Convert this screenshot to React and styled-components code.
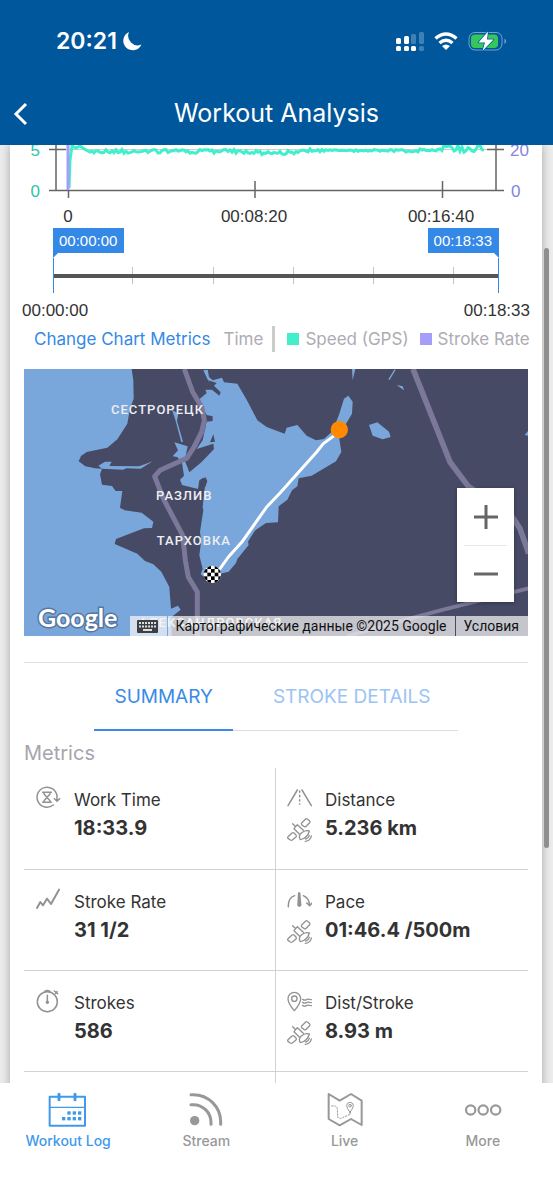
import React, { useState } from "react";
import styled, { createGlobalStyle } from "styled-components";

const GlobalStyle = createGlobalStyle`
  *, *::before, *::after { box-sizing: border-box; }
  body { margin: 0; background: #ececec; }
  button { font: inherit; color: inherit; background: none; border: 0; padding: 0; margin: 0; cursor: pointer; }
  svg { display: block; }
`;

const sans = `Inter, "Noto Sans", sans-serif`;
const numeric = `"Liberation Sans", Arial, sans-serif`;
const mapFont = `Roboto, "Noto Sans", sans-serif`;

const Shell = styled.div`
  display: flex;
  flex-direction: column;
  height: 100vh;
  font-family: ${sans};
  color: #333;
`;

const Header = styled.header`
  flex: none;
  background: #00579c;
  color: #fff;
  position: relative;
  z-index: 2;
`;

const StatusBar = styled.div`
  display: flex;
  align-items: center;
  justify-content: space-between;
  height: 82px;
  padding: 0 46px 0 56px;
`;

const Clock = styled.div`
  display: flex;
  align-items: center;
  gap: 4px;
  font-size: 23px;
  font-weight: 600;
`;

const NavBar = styled.div`
  display: grid;
  grid-template-columns: 1fr auto 1fr;
  align-items: center;
  height: 63px;
  padding: 0 12px;
`;

const BackButton = styled.button`
  justify-self: start;
`;

const Title = styled.h1`
  margin: 0;
  font-size: 25px;
  font-weight: 400;
  line-height: 31px;
`;

const Main = styled.main`
  flex: 1;
  min-height: 0;
  overflow: hidden;
  position: relative;
`;

const ScrollThumb = styled.div`
  position: absolute;
  right: 4px;
  top: 11%;
  width: 5px;
  height: 64%;
  border-radius: 3px;
  background: #8f8f8f;
`;

const Card = styled.article`
  margin: 0 11px 0 10px;
  background: #fff;
  box-shadow: 0 0 9px rgba(0, 0, 0, 0.3);
`;

const ChartSvg = styled.svg`
  width: 100%;
  height: auto;
  font-family: ${numeric};
  font-size: 17px;
`;

const RangePicker = styled.div`
  padding: 0 43px;
`;

const FlagRow = styled.div`
  display: flex;
  justify-content: space-between;
`;

const Flag = styled.output`
  height: 30px;
  padding: 0 7px 0 6px;
  background: #3488e6;
  color: #fff;
  font: 15px/25px ${numeric};
  clip-path: ${(p) =>
    p.$end
      ? "polygon(0 0, 100% 0, 100% 100%, calc(100% - 5px) 25px, 0 25px)"
      : "polygon(0 0, 100% 0, 100% 25px, 5px 25px, 0 100%)"};
`;

const RangeStack = styled.div`
  display: grid;
  align-items: center;
  height: 35px;
  & > * { grid-area: 1 / 1; }
`;

const Ticks = styled.div`
  display: flex;
  height: 17px;
`;

const Tick = styled.span`
  width: 18%;
  border-right: 1px solid #c4c4c4;
`;

const RangeTrack = styled.div`
  height: 4px;
  background: #555;
`;

const RangeInput = styled.input`
  appearance: none;
  width: 100%;
  height: 35px;
  margin: 0;
  background: none;
  pointer-events: none;
  &::-webkit-slider-thumb {
    appearance: none;
    width: 1px;
    height: 35px;
    background: #3488e6;
    pointer-events: auto;
  }
`;

const RangeEnds = styled.div`
  display: flex;
  justify-content: space-between;
  padding: 8px 12px 0;
  font: 17px/20px ${numeric};
`;

const Legend = styled.div`
  display: flex;
  align-items: center;
  height: 36px;
  padding-left: 24px;
  font-size: 17px;
  white-space: nowrap;
  color: #adacb3;
`;

const MetricsLink = styled.button`
  color: #3488e6;
  margin-right: 13px;
`;

const LegendDivider = styled.span`
  width: 3px;
  height: 26px;
  margin: 0 12px 0 9px;
  background: #ccc;
`;

const LegendItem = styled.span`
  display: flex;
  align-items: center;
  gap: 6px;
  margin-right: 11px;
  &::before {
    content: "";
    width: 12px;
    height: 12px;
    background: ${(p) => p.$color};
  }
`;

const Body = styled.div`
  padding: 12px 14px 0;
`;

const MapFrame = styled.section`
  position: relative;
  overflow: hidden;
  aspect-ratio: 504 / 267;
  background: #464a65;
  font-family: ${mapFont};
`;

const MapSvg = styled.svg`
  width: 100%;
  height: 100%;
`;

const MapLabel = styled.span`
  position: absolute;
  left: ${(p) => p.$x}%;
  top: ${(p) => p.$y}%;
  transform: translate(-50%, -50%);
  font-size: 13px;
  font-weight: 500;
  line-height: 16px;
  letter-spacing: 1px;
  color: #eeeef2;
`;

const MapLogo = styled.a`
  position: absolute;
  left: 14px;
  bottom: 4px;
  color: #fff;
  text-decoration: none;
  font: 700 25px/30px Lato, sans-serif;
  -webkit-text-stroke: 3px #56779f;
  paint-order: stroke fill;
`;

const Attribution = styled.div`
  position: absolute;
  right: 0;
  bottom: 0;
  display: flex;
  gap: 1px;
  height: 20px;
  font-size: 14px;
  line-height: 20px;
  color: #111;
  white-space: nowrap;
  & > * {
    display: flex;
    align-items: center;
    padding: 0 9px 0 7px;
    background: rgba(245, 245, 245, 0.72);
  }
  a { color: inherit; text-decoration: none; }
`;

const ZoomControl = styled.div`
  position: absolute;
  right: 14px;
  bottom: 34px;
  width: 57px;
  background: #fff;
  box-shadow: 0 1px 4px rgba(0, 0, 0, 0.3);
  padding: 0 7px;
`;

const ZoomButton = styled.button`
  display: grid;
  place-items: center;
  width: 100%;
  height: 57px;
  & + & { border-top: 1px solid #e6e6e6; }
`;

const Rule = styled.hr`
  height: 1px;
  border: 0;
  margin: 26px 0 0;
  background: #e0e0e0;
`;

const Tabs = styled.div`
  display: flex;
  width: max-content;
  margin: 0 auto;
  border-bottom: 1px solid #ddd;
`;

const Tab = styled.button`
  height: 68px;
  padding: ${(p) => (p.$active ? "0 20px" : "0 27px 0 40px")};
  margin-bottom: -1px;
  border-bottom: 2px solid ${(p) => (p.$active ? "#3a8ae6" : "transparent")};
  color: ${(p) => (p.$active ? "#3a8ae6" : "#9bc4f3")};
  font-size: 19px;
`;

const SectionTitle = styled.h2`
  margin: 0;
  padding-top: 8px;
  font-size: 20px;
  font-weight: 400;
  line-height: 29px;
  color: #a6a5ad;
`;

const MetricGrid = styled.dl`
  display: grid;
  grid-template-columns: 1fr 1fr;
  margin: 0;
`;

const MetricCell = styled.div`
  display: flex;
  gap: 13px;
  height: ${(p) => (p.$first ? 102 : 101)}px;
  padding: 17px 0 0 11px;
  border-bottom: 1px solid #d2d2d2;
  &:nth-child(odd) {
    padding-left: 12px;
    border-right: 1px solid #d2d2d2;
  }
`;

const IconColumn = styled.div`
  display: flex;
  flex-direction: column;
  gap: 7px;
  color: #929292;
`;

const MetricLabel = styled.dt`
  font-size: 17px;
  line-height: 30px;
`;

const MetricValue = styled.dd`
  margin: 0;
  font-size: 20px;
  font-weight: 700;
  line-height: 26px;
`;

const TabBar = styled.nav`
  flex: none;
  display: flex;
  height: 117px;
  background: #fff;
  position: relative;
  z-index: 2;
`;

const TabBarItem = styled.a`
  flex: 1;
  display: flex;
  flex-direction: column;
  align-items: center;
  gap: 5px;
  padding: 8px 2px 0 0;
  color: ${(p) => (p.$active ? "#4299ea" : "#989898")};
  font-size: 14px;
  font-weight: 500;
  line-height: 16px;
  text-decoration: none;
`;

const MetricIcon = ({ box, children, width = 4 }) => (
  <svg width="25" height="25" viewBox={box} fill="none" stroke="currentColor" strokeWidth={width} strokeLinecap="round" strokeLinejoin="round" aria-hidden="true">
    {children}
  </svg>
);

const WorkTimeIcon = () => (
  <MetricIcon box="108 406 75 75" width={4.5}>
    <path d="M160 466A30 30 0 1 1 171 440V453M163 447L171 455L179 447" />
    <path d="M128 428H154M128 458H154M132 428V433L150 453V458M150 428V433L132 453V458" />
  </MetricIcon>
);
const DistanceIcon = () => (
  <MetricIcon box="50 105 75 75" width={4.5}>
    <path d="M53 167L81 120M95 120L123 167" />
    <path d="M88 123V163" strokeDasharray="4 9" />
  </MetricIcon>
);
const SatelliteIcon = () => (
  <MetricIcon box="50 201 75 75" width={4}>
    <path d="M94 219L106 207Q109 205 111 207L118 213Q120 216 118 218L106 230Q103 232 100 229L94 224Q92 221 94 219Z" />
    <path d="M67 221L76 230M71 236L81 224L99 241M71 236L87 252" />
    <path d="M53 260L65 249Q68 247 71 249L77 255Q79 258 77 261L66 270Q63 272 60 270L53 265Q51 262 53 260Z" />
    <path d="M90 269Q83 258 93 249Q104 239 117 243Q115 253 107 260Q99 268 90 269Z" />
    <path d="M106 267Q115 264 117 256M105 274Q121 272 123 258" />
  </MetricIcon>
);
const PaceIcon = () => (
  <MetricIcon box="50 408 75 75" width={4.5}>
    <path d="M54 467Q53 441 73 434M99 434Q116 441 118 463M109 456L118 464L125 456" />
    <path d="M85 426L83 463Q87 468 91 463L88 426Z" fill="currentColor" />
  </MetricIcon>
);
const StrokeRateIcon = () => (
  <MetricIcon box="108 48 75 75" width={6}>
    <path d="M111 111L121 93L129 103L141 83L153 99L177 56" />
  </MetricIcon>
);
const StrokesIcon = () => (
  <MetricIcon box="108 351 75 75" width={4.5}>
    <circle cx="142" cy="392" r="30" />
    <path d="M142 373V394M134 361Q142 356 150 361M163 360L173 368M171 362L167 367" />
    <circle cx="142" cy="394" r="3" fill="currentColor" />
  </MetricIcon>
);
const StrokeDistanceIcon = () => (
  <MetricIcon box="50 81 75 75" width={4}>
    <path d="M72 149Q53 127 53 113A19 19 0 0 1 91 113Q91 127 72 149Z" />
    <circle cx="72" cy="113" r="8" />
    <path d="M97 115Q103 119 108 116T118 115L123 116M97 124Q103 128 108 125T118 124L123 125M97 133Q103 137 108 134T118 133L123 134" />
  </MetricIcon>
);

const BarIcon = ({ box, children, width }) => (
  <svg width="40" height="37" viewBox={box} fill="none" stroke="currentColor" strokeWidth={width} strokeLinecap="round" strokeLinejoin="round" aria-hidden="true">
    {children}
  </svg>
);

const calendarDots = [[208, 99], [224, 99], [240, 99], [192, 116], [208, 116], [224, 116], [240, 116]];

const CalendarIcon = () => (
  <BarIcon box="145 33 120 111" width={6}>
    <rect x="150" y="50" width="106" height="87" />
    <path d="M150 82H256" strokeWidth="4" />
    <path d="M178 43V59M226 43V59" strokeWidth="9" />
    {calendarDots.map(([x, y]) => (
      <rect key={`${x}-${y}`} x={x - 5} y={y - 5} width="10" height="10" fill="currentColor" stroke="none" />
    ))}
  </BarIcon>
);
const StreamIcon = () => (
  <BarIcon box="560 33 120 111" width={9}>
    <circle cx="586" cy="122" r="14" fill="currentColor" stroke="none" />
    <path d="M575 74H582A53 53 0 0 1 635 127V133M575 44H582A82 82 0 0 1 664 126V133" />
  </BarIcon>
);
const LiveIcon = () => (
  <BarIcon box="156 33 120 111" width={6}>
    <path d="M167 42L200 62L234 42L266 62V135L234 117L200 136L167 117Z" />
    <path d="M176 78Q193 76 193 88L194 112L202 116L231 103" strokeWidth="3" strokeDasharray="4 5" />
    <path d="M231 97Q221 84 221 77A10 10 0 0 1 241 77Q241 84 231 97ZM231 97V102" strokeWidth="3" />
    <circle cx="231" cy="77" r="4" strokeWidth="3" />
  </BarIcon>
);
const MoreIcon = () => (
  <BarIcon box="572 33 120 111" width={6.5}>
    <circle cx="595" cy="90" r="14" />
    <circle cx="632.500" cy="90" r="14" />
    <circle cx="670" cy="90" r="14" />
  </BarIcon>
);

const MoonIcon = () => (
  <svg width="22" height="22" viewBox="0 0 22 22" fill="#fff" aria-hidden="true">
    <path d="M8 2A9.500 9.500 0 1 0 20.500 14.500A9.500 9.500 0 0 1 8 2Z" />
  </svg>
);

const StatusIcons = () => (
  <svg width="112" height="22" viewBox="395 30 112 22" aria-label="Signal, Wi-Fi, battery charging">
    <g fill="#fff">
      <rect x="396" y="38" width="5" height="6" rx="1.500" />
      <rect x="404" y="36" width="5" height="8" rx="1.500" />
      <rect x="396" y="46" width="5" height="5" rx="1.500" />
      <rect x="404" y="46" width="5" height="5" rx="1.500" />
      <rect x="411" y="46" width="5" height="5" rx="1.500" />
    </g>
    <g fill="#fff" opacity="0.250">
      <rect x="411" y="34" width="5" height="10" rx="1.500" />
      <rect x="419" y="32" width="5" height="12" rx="1.500" />
      <rect x="419" y="46" width="5" height="5" rx="1.500" />
    </g>
    <g fill="none" stroke="#fff" strokeWidth="3.400">
      <path d="M435.500 38.500Q446 29.500 456.500 38.500" />
      <path d="M439.500 43Q446 37.500 452.500 43" />
      <path d="M442 46Q446 43 450 46L446 50Z" fill="#fff" stroke="none" />
    </g>
    <rect x="469" y="32.500" width="33" height="17.500" rx="6" fill="none" stroke="#fff" strokeOpacity="0.450" />
    <path d="M504.500 38.500Q507.500 41 504.500 44Z" fill="#fff" opacity="0.500" />
    <rect x="471" y="34.500" width="27" height="13.500" rx="4" fill="#34c759" />
    <path d="M488 31.500L478.500 42.500H485L482.500 51L493.500 39.500H487Z" fill="#fff" stroke="#00579c" strokeWidth="1.500" paintOrder="stroke" strokeLinejoin="round" />
  </svg>
);

/* Speed trace: a short ramp, then a nearly flat line with small jitter. */
const speedPoints = (() => {
  const points = [[69, 188], [70, 160], [72, 146], [76, 148], [80, 146], [86, 150]];
  let seed = 11;
  for (let x = 90; x <= 484; x += 2) {
    seed = (seed * 1103515245 + 12345) % 2147483648;
    const noise = seed / 2147483648 - 0.5;
    const base = x < 260 ? 151.5 : x < 300 ? 152.5 : x < 440 ? 150.5 : 148.5;
    const spread = x > 440 ? 8 : x > 320 && x < 400 ? 2 : 4;
    points.push([x, base + noise * spread]);
  }
  return points.map((p) => p.join(",")).join(" ");
})();

const Chart = () => (
  <ChartSvg viewBox="10 145 532 83" role="img" aria-label="Speed and stroke rate over time">
    <path d="M66 149.500H487" stroke="#ccc" />
    <g stroke="#666" strokeWidth="1.500" fill="none">
      <path d="M56 145V190M49 149.500H66M49 190.500H504M496 145V190M487 149.500H504" />
      <path d="M68.500 190V198M255 181V198M442.500 181V198" />
    </g>
    <polyline points={speedPoints} fill="none" stroke="#41efcb" strokeWidth="3" />
    <path d="M68 145V190" stroke="#a59dfa" strokeWidth="3" />
    <g fill="#2fc4a6" textAnchor="end">
      <text x="40" y="156">5</text>
      <text x="40" y="197">0</text>
    </g>
    <g fill="#8583de">
      <text x="510" y="156">20</text>
      <text x="511" y="197">0</text>
    </g>
    <g fill="#333" textAnchor="middle">
      <text x="68" y="222">0</text>
      <text x="254" y="222">00:08:20</text>
      <text x="441" y="222">00:16:40</text>
    </g>
  </ChartSvg>
);

const formatTime = (s) =>
  [Math.floor(s / 3600), Math.floor(s / 60) % 60, s % 60].map((n) => String(n).padStart(2, "0")).join(":");

const total = 1113;

const TimeRange = () => {
  const [start, setStart] = useState(0);
  const [end, setEnd] = useState(total);
  return (
    <>
      <RangePicker>
        <FlagRow>
          <Flag>{formatTime(start)}</Flag>
          <Flag $end>{formatTime(end)}</Flag>
        </FlagRow>
        <RangeStack>
          <Ticks>{[1, 2, 3, 4, 5].map((n) => <Tick key={n} />)}</Ticks>
          <RangeTrack />
          <RangeInput type="range" aria-label="Range start" min="0" max={total} value={start} onChange={(e) => setStart(Math.min(+e.target.value, end))} />
          <RangeInput type="range" aria-label="Range end" min="0" max={total} value={end} onChange={(e) => setEnd(Math.max(+e.target.value, start))} />
        </RangeStack>
      </RangePicker>
      <RangeEnds>
        <span>{formatTime(0)}</span>
        <span>{formatTime(total)}</span>
      </RangeEnds>
    </>
  );
};

const places = [
  { name: "СЕСТРОРЕЦК", x: 26.5, y: 15.3 },
  { name: "РАЗЛИВ", x: 31.8, y: 47.6 },
  { name: "ТАРХОВКА", x: 33.7, y: 64.3 },
  { name: "АЛЕКСАНДРОВСКАЯ", x: 37, y: 95 },
];

const checks = [];
for (let row = 0; row < 5; row += 1)
  for (let col = 0; col < 5; col += 1)
    if ((row + col) % 2 === 1) checks.push([551 + col * 11, 615 + row * 11]);

const RouteMap = () => (
  <MapFrame aria-label="Route map">
    <MapSvg viewBox="12 26 1512 801" preserveAspectRatio="xMidYMid slice" aria-hidden="true">
      <g fill="#7aa7db">
        <path d="M12 26H335L340 60L341 115L330 145L322 190L292 237L262 262L200 275L183 287L176 303L196 318L225 324L246 325L240 342L246 373L276 377L287 392H307L300 442L314 450L365 457L400 484L396 503L372 504L288 536L284 551L352 580L375 602L400 612L424 634L448 680L453 745L474 736L482 748L455 770V828H12Z" />
        <path d="M235 316L255 304H275L268 317L358 318L398 303L362 325L318 324L310 328L246 325Z" />
        <path d="M456 148L475 160L471 182L489 244L484 246L466 178Z" />
        <path d="M550 30L563 28L567 50L578 60L606 52L612 66L652 70L680 118L712 180L740 200L778 214L794 220L800 202L832 194L860 226L888 240L912 236L938 212L958 160L972 115L985 106L998 124L996 160L978 190L958 236L964 275L948 303L875 346L836 354L832 378L816 390L802 418L776 438L774 486L738 488L706 510L700 518L684 544L686 554L652 596L648 608L626 634L600 640L560 655L542 642L548 625L538 585L544 540L540 515L550 450L548 440L556 368L560 360L550 352L538 360L534 386L486 374L480 358L492 346L486 308L472 290L458 288L474 270L463 246L503 258L494 300L508 336L545 305L582 266L580 250L530 266L548 240L560 184L578 182V168L560 164L540 130V115L560 98L556 88L578 88L564 60Z" />
        <path d="M996 26H1006L998 60ZM1130 74L1148 78L1152 90ZM1047 194L1072 186L1107 214L1112 230L1088 237L1058 226ZM1514 224L1524 212V226Z" />
      </g>
      <path d="M1107 58L1125 28" stroke="#7aa7db" strokeWidth="4" />
      <path d="M570 246L580 222L585 244ZM564 60L590 68L582 76L602 96L598 106L576 88ZM536 370L556 350L562 362L556 380Z" fill="#464a65" />
      <g fill="none" stroke="#7b7899" strokeWidth="15" strokeLinejoin="round">
        <path d="M493 26L518 95L545 140L553 180L545 215L522 260L500 294L420 330L404 348L430 415L488 525L496 600L505 650L532 695V828" />
        <path d="M1179 26L1290 305L1345 378L1385 405L1470 460L1500 505L1526 580" strokeWidth="17" />
        <path d="M980 828L1180 772L1270 748L1526 684" strokeWidth="12" />
      </g>
      <path d="M598 628L625 590L665 546L740 440L780 398L890 275L910 250L948 222" fill="none" stroke="#fff" strokeWidth="9" strokeLinejoin="round" />
      <circle cx="958" cy="208" r="26" fill="#ff8a00" />
      <clipPath id="finish"><circle cx="577" cy="642" r="26" /></clipPath>
      <circle cx="577" cy="642" r="26" fill="#fff" />
      <g clipPath="url(#finish)">
        {checks.map(([x, y]) => <rect key={`${x}-${y}`} x={x} y={y} width="11" height="11" />)}
      </g>
    </MapSvg>
    {places.map((p) => <MapLabel key={p.name} $x={p.x} $y={p.y}>{p.name}</MapLabel>)}
    <MapLogo href="#google">Google</MapLogo>
    <ZoomControl>
      <ZoomButton aria-label="Zoom in">
        <svg width="24" height="24" stroke="#666" strokeWidth="3"><path d="M0 12H24M12 0V24" /></svg>
      </ZoomButton>
      <ZoomButton aria-label="Zoom out">
        <svg width="24" height="24" stroke="#666" strokeWidth="3"><path d="M0 12H24" /></svg>
      </ZoomButton>
    </ZoomControl>
    <Attribution>
      <button aria-label="Keyboard shortcuts">
        <svg width="21" height="13" viewBox="0 0 21 13">
          <rect width="21" height="13" rx="1" fill="#3c3f44" />
          <path d="M2 3H19M2 6.500H19" stroke="#ddd" strokeWidth="2" strokeDasharray="2 1" />
          <path d="M6 10H15" stroke="#ddd" strokeWidth="2" />
        </svg>
      </button>
      <span>Картографические данные ©2025 Google</span>
      <a href="#terms">Условия</a>
    </Attribution>
  </MapFrame>
);

const metrics = [
  { label: "Work Time", value: "18:33.9", Icon: WorkTimeIcon },
  { label: "Distance", value: "5.236 km", Icon: DistanceIcon, gps: true },
  { label: "Stroke Rate", value: "31 1/2", Icon: StrokeRateIcon },
  { label: "Pace", value: "01:46.4 /500m", Icon: PaceIcon, gps: true },
  { label: "Strokes", value: "586", Icon: StrokesIcon },
  { label: "Dist/Stroke", value: "8.93 m", Icon: StrokeDistanceIcon, gps: true },
];

const sections = [
  { label: "Workout Log", Icon: CalendarIcon, active: true },
  { label: "Stream", Icon: StreamIcon },
  { label: "Live", Icon: LiveIcon },
  { label: "More", Icon: MoreIcon },
];

export default function App() {
  return (
    <Shell>
      <GlobalStyle />
      <Header>
        <StatusBar>
          <Clock>20:21<MoonIcon /></Clock>
          <StatusIcons />
        </StatusBar>
        <NavBar>
          <BackButton aria-label="Back">
            <svg width="16" height="24" viewBox="0 0 16 24" fill="none" stroke="#fff" strokeWidth="3"><path d="M14 2L4 12L14 22" /></svg>
          </BackButton>
          <Title>Workout Analysis</Title>
        </NavBar>
      </Header>
      <Main>
        <Card>
          <Chart />
          <TimeRange />
          <Legend>
            <MetricsLink>Change Chart Metrics</MetricsLink>
            <span>Time</span>
            <LegendDivider />
            <LegendItem $color="#41efcb">Speed (GPS)</LegendItem>
            <LegendItem $color="#a59dfa">Stroke Rate</LegendItem>
          </Legend>
          <Body>
            <RouteMap />
            <Rule />
            <Tabs role="tablist">
              <Tab role="tab" aria-selected="true" $active>SUMMARY</Tab>
              <Tab role="tab" aria-selected="false">STROKE DETAILS</Tab>
            </Tabs>
            <SectionTitle>Metrics</SectionTitle>
            <MetricGrid>
              {metrics.map(({ label, value, Icon, gps }, i) => (
                <MetricCell key={label} $first={i < 2}>
                  <IconColumn>
                    <Icon />
                    {gps && <SatelliteIcon />}
                  </IconColumn>
                  <div>
                    <MetricLabel>{label}</MetricLabel>
                    <MetricValue>{value}</MetricValue>
                  </div>
                </MetricCell>
              ))}
              <MetricCell />
              <MetricCell />
            </MetricGrid>
          </Body>
        </Card>
        <ScrollThumb />
      </Main>
      <TabBar>
        {sections.map(({ label, Icon, active }) => (
          <TabBarItem key={label} href={`#${label}`} $active={active}>
            <Icon />
            {label}
          </TabBarItem>
        ))}
      </TabBar>
    </Shell>
  );
}
